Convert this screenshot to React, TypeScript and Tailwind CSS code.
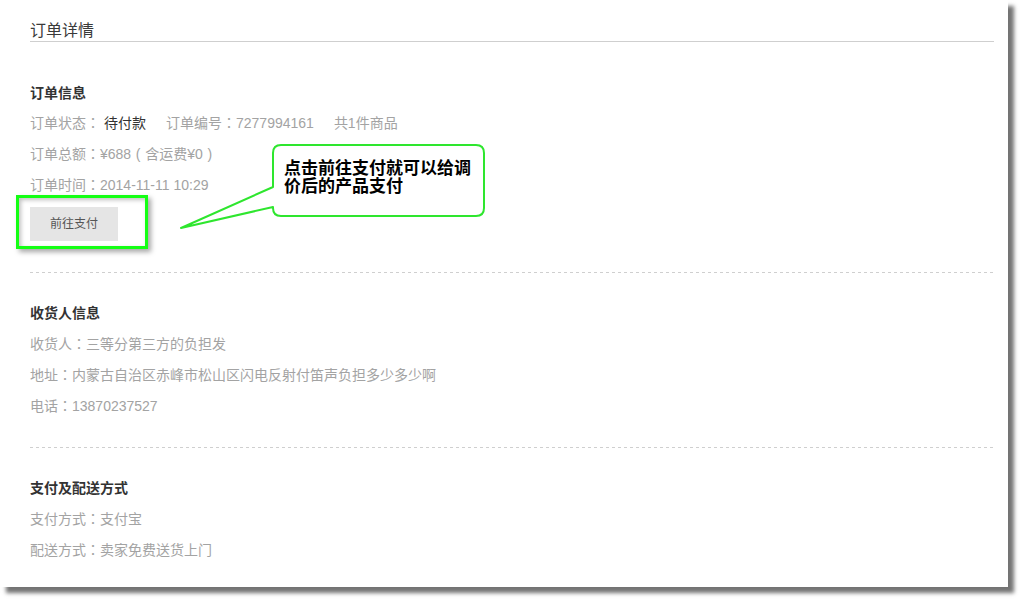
import React from "react";

// full-width punctuation sits centred in the reference
const P = ({ text }: { text: string }) => (
  <>
    {text.split(/([：（）])/).map((part, i) => {
      if (part === "：")
        return (
          <span key={i} className="leading-none font-['Noto_Sans_CJK_TC',sans-serif]">
            {part}
          </span>
        );
      if (part === "（" || part === "）")
        return (
          <span key={i} className="inline-block w-[14px] text-center leading-none">
            {part === "（" ? "(" : ")"}
          </span>
        );
      return <React.Fragment key={i}>{part}</React.Fragment>;
    })}
  </>
);

const Dashed = () => (
  <div className="h-px w-full bg-[linear-gradient(to_right,#cfcfcf_3px,transparent_3px)] bg-[length:6px_1px] bg-repeat-x" />
);

const Row = ({ children }: { children: React.ReactNode }) => (
  <div className="h-[31px] leading-[31px] text-[14px] text-[#a3a3a3] whitespace-nowrap">{children}</div>
);

const Title = ({ children }: { children: React.ReactNode }) => (
  <div className="h-[31px] leading-[31px] text-[14px] font-bold text-[#333]">{children}</div>
);

const Callout = () => (
  <svg
    className="absolute left-0 top-0 pointer-events-none"
    width="1008"
    height="587"
    viewBox="0 0 1008 587"
  >
    <path
      d="M281 145 H476 Q484 145 484 153 V208 Q484 216 476 216 H281 Q273 216 273 208 V207 L181 228 L273 187 V153 Q273 145 281 145 Z"
      fill="#fff"
      stroke="#2ee62e"
      strokeWidth="2"
      strokeLinejoin="round"
    />
  </svg>
);

export default function App() {
  return (
    <div className="w-[1023px] h-[602px] bg-white overflow-hidden font-['Liberation_Sans','Noto_Sans_CJK_SC',sans-serif]">
      <div className="relative w-[1008px] h-[587px] bg-white shadow-[6px_6px_4px_rgba(0,0,0,0.55)] pl-[30px] pr-[14px]">
        <div className="pt-[19px]">
          <div className="h-[23px] leading-[23px] text-[16px] text-[#3a3a3a] border-b border-[#cfcfcf]">订单详情</div>
        </div>

        <div className="pt-[37px] pb-[31px]">
          <div className="h-[29px] leading-[29px] text-[14px] font-bold text-[#333]">订单信息</div>
          <Row>
            <P text="订单状态：" />
            <span className="ml-[4px] text-[#333]">待付款</span>
            <span className="ml-[20px]">
              <P text="订单编号：7277994161" />
            </span>
            <span className="ml-[20px]">共1件商品</span>
          </Row>
          <Row>
            <P text="订单总额：¥688（含运费¥0）" />
          </Row>
          <Row>
            <P text="订单时间：2014-11-11 10:29" />
          </Row>
          <button className="mt-[6px] w-[88px] h-[34px] bg-[#e5e5e5] text-[12px] text-[#555]">前往支付</button>
        </div>
        <Dashed />

        <div className="pt-[25px] pb-[25px]">
          <Title>收货人信息</Title>
          <Row>
            <P text="收货人：三等分第三方的负担发" />
          </Row>
          <Row>
            <P text="地址：内蒙古自治区赤峰市松山区闪电反射付笛声负担多少多少啊" />
          </Row>
          <Row>
            <P text="电话：13870237527" />
          </Row>
        </div>
        <Dashed />

        <div className="pt-[25px]">
          <Title>支付及配送方式</Title>
          <Row>
            <P text="支付方式：支付宝" />
          </Row>
          <Row>
            <P text="配送方式：卖家免费送货上门" />
          </Row>
        </div>

        {/* annotation overlays */}
        <div className="absolute left-[16px] top-[195px] w-[132px] h-[54px] border-[3px] border-[#14ff14] shadow-[3px_3px_5px_rgba(0,0,0,0.35),inset_2px_2px_4px_rgba(0,0,0,0.25)]" />
        <Callout />
        <div className="absolute left-[284px] top-[160px] text-[17px] leading-[18px] font-bold text-black whitespace-nowrap">
          点击前往支付就可以给调
          <br />
          价后的产品支付
        </div>
      </div>
    </div>
  );
}
